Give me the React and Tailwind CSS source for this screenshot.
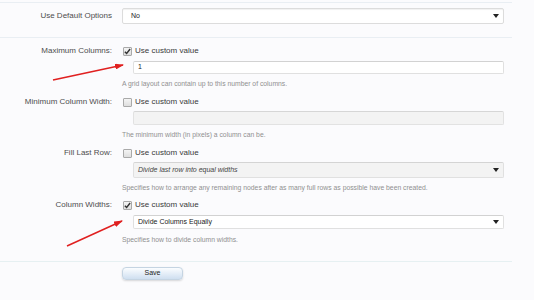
import React from 'react';

const Check = ({ checked }) => (
  <span className="flex h-[9px] w-[9px] items-center justify-center rounded-[1px] border border-[#a9a9a9] bg-gradient-to-b from-[#f4f4f4] to-[#dedede]">
    {checked && (
      <svg width="7" height="7" viewBox="0 0 8 8">
        <path d="M1 4.2 L3 6.3 L7 1.2" fill="none" stroke="#333" strokeWidth="1.6" />
      </svg>
    )}
  </span>
);

const Caret = () => (
  <svg width="6" height="5" viewBox="0 0 6 5" className="mr-[4px]">
    <path d="M0 0 H6 L3 4 Z" fill="#222" />
  </svg>
);

const Field = ({ label, checked, children, help, className = '' }) => (
  <div className={`flex ${className}`}>
    <div className="w-[112px] shrink-0 text-right text-[8px] leading-[12px] text-[#4d4d4d]">{label}</div>
    <div className="ml-[10px] flex w-[382px] flex-col">
      <div className="flex h-[12px] items-center gap-[3px] pl-[1px]">
        <Check checked={checked} />
        <span className="text-[8px] leading-[12px] text-[#3a3a3a]">Use custom value</span>
      </div>
      {children}
      {help}
    </div>
  </div>
);

const Help = ({ children, className = '' }) => (
  <p className={`h-[10px] text-[6.8px] leading-[10px] text-[#909090] ${className}`}>{children}</p>
);

export default function App() {
  return (
    <div className="relative h-[300px] w-[534px] overflow-hidden bg-[#fbfbfd] font-['Liberation_Sans','DejaVu_Sans',sans-serif]">
      <div className="mt-[2px] w-[512px] border-t border-[#e9eef3]">
        {/* default options */}
        <div className="flex h-[34px] pt-[5px]">
          <div className="w-[112px] shrink-0 text-right text-[8px] leading-[16px] text-[#4d4d4d]">Use Default Options</div>
          <div className="ml-[10px] flex h-[16px] w-[382px] items-center justify-between rounded-[2px] border border-[#dcdcdc] bg-white pl-[8px] shadow-[inset_0_1px_1px_rgba(0,0,0,0.06)]">
            <span className="text-[7px] text-[#222]">No</span>
            <Caret />
          </div>
        </div>

        <div className="border-t border-[#e9eef3] pt-[7px]">
          <Field
            label="Maximum Columns:"
            checked
            help={<Help className="mt-[5px]">A grid layout can contain up to this number of columns.</Help>}
          >
            <div className="ml-[11px] mt-[4px] flex h-[13px] items-center rounded-[2px] border border-[#e0e0e0] border-t-[#d2d2d2] bg-white pl-[4px] text-[7px] text-[#222]">
              1
            </div>
          </Field>

          <Field
            className="mt-[7px]"
            label="Minimum Column Width:"
            help={<Help className="mt-[5px]">The minimum width (in pixels) a column can be.</Help>}
          >
            <div className="ml-[11px] mt-[3px] h-[14px] rounded-[2px] border border-[#e2e2e2] border-t-[#d6d6d6] bg-[#f3f3f3]" />
          </Field>

          <Field
            className="mt-[7px]"
            label="Fill Last Row:"
            help={
              <Help className="mt-[5px]">
                Specifies how to arrange any remaining nodes after as many full rows as possible have been created.
              </Help>
            }
          >
            <div className="ml-[11px] mt-[3px] flex h-[16px] items-center justify-between rounded-[2px] border border-[#e0e0e0] border-t-[#d4d4d4] bg-[#f3f3f3] pl-[4px]">
              <span className="text-[7px] italic text-[#444]">Divide last row into equal widths</span>
              <Caret />
            </div>
          </Field>

          <Field
            className="mt-[6px]"
            label="Column Widths:"
            checked
            help={<Help className="mt-[6px]">Specifies how to divide column widths.</Help>}
          >
            <div className="ml-[11px] mt-[4px] flex h-[14px] items-center justify-between rounded-[2px] border border-[#e0e0e0] border-t-[#d2d2d2] bg-white pl-[4px]">
              <span className="text-[7px] text-[#222]">Divide Columns Equally</span>
              <Caret />
            </div>
          </Field>
        </div>

        <div className="mt-[16px] border-t border-[#e6f0f2]" />
        <div className="ml-[122px] mt-[5px] flex h-[13px] w-[61px] items-center justify-center rounded-[4px] border border-[#c5d4e2] bg-gradient-to-b from-[#fbfdff] to-[#cfdff0] text-[7px] text-[#222] shadow-[0_1px_2px_rgba(0,0,0,0.15)]">
          Save
        </div>
      </div>

      {/* annotation arrows */}
      <svg className="pointer-events-none absolute left-0 top-0" width="534" height="300">
        <defs>
          <marker id="ah" markerWidth="9" markerHeight="6" refX="8" refY="3" orient="auto" markerUnits="userSpaceOnUse">
            <path d="M0 0 L9 3 L0 6 Z" fill="#e02020" />
          </marker>
        </defs>
        <line x1="53" y1="80" x2="123" y2="65" stroke="#e02020" strokeWidth="1.5" markerEnd="url(#ah)" />
        <line x1="67" y1="246" x2="122" y2="221" stroke="#e02020" strokeWidth="1.5" markerEnd="url(#ah)" />
      </svg>
    </div>
  );
}
